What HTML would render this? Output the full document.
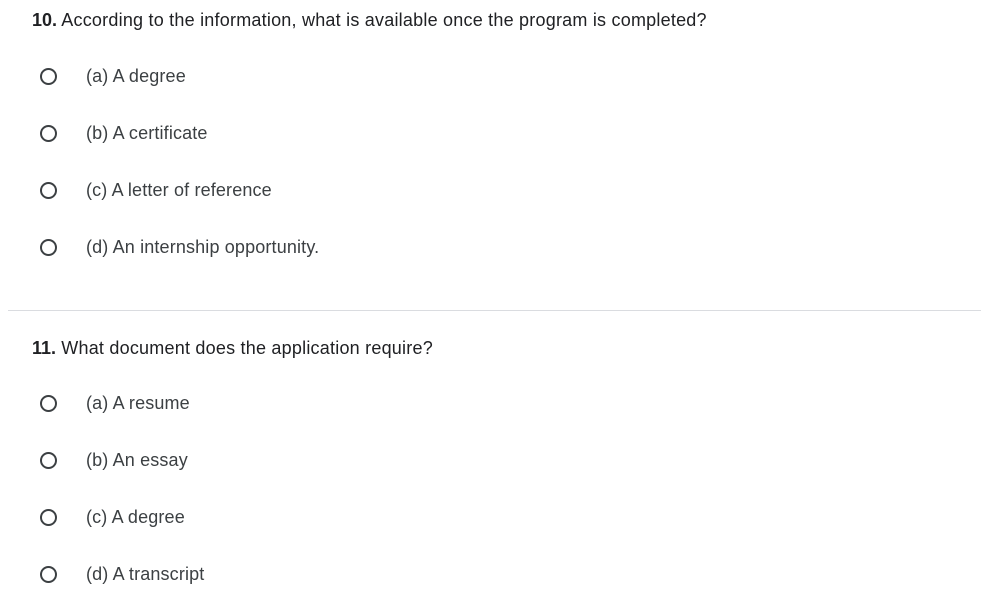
<!DOCTYPE html>
<html><head><meta charset="utf-8"><style>
body{margin:0;width:981px;height:615px;background:#fff;font-family:"Liberation Sans",sans-serif;color:#202124;position:relative;overflow:hidden}
.q{position:absolute;left:32px;font-size:18px;letter-spacing:0.22px;white-space:nowrap}
.q b{font-weight:bold;letter-spacing:0}
.o{position:absolute;left:86px;font-size:18px;letter-spacing:0.15px;color:#3c4043;white-space:nowrap}
.c{position:absolute;left:40px;width:13px;height:13px;border:2px solid #3c4043;border-radius:50%}
.hr{position:absolute;left:8px;right:0;top:310px;height:1px;background:#dadce0}
</style></head><body>
<div class="q" style="top:10px"><b>10.</b> According to the information, what is available once the program is completed?</div>
<div class="c" style="top:68px"></div><div class="o" style="top:66px">(a) A degree</div>
<div class="c" style="top:125px"></div><div class="o" style="top:123px">(b) A certificate</div>
<div class="c" style="top:182px"></div><div class="o" style="top:180px">(c) A letter of reference</div>
<div class="c" style="top:239px"></div><div class="o" style="top:237px">(d) An internship opportunity.</div>
<div class="hr"></div>
<div class="q" style="top:338px"><b>11.</b> What document does the application require?</div>
<div class="c" style="top:395px"></div><div class="o" style="top:393px">(a) A resume</div>
<div class="c" style="top:452px"></div><div class="o" style="top:450px">(b) An essay</div>
<div class="c" style="top:509px"></div><div class="o" style="top:507px">(c) A degree</div>
<div class="c" style="top:566px"></div><div class="o" style="top:564px">(d) A transcript</div>
</body></html>
